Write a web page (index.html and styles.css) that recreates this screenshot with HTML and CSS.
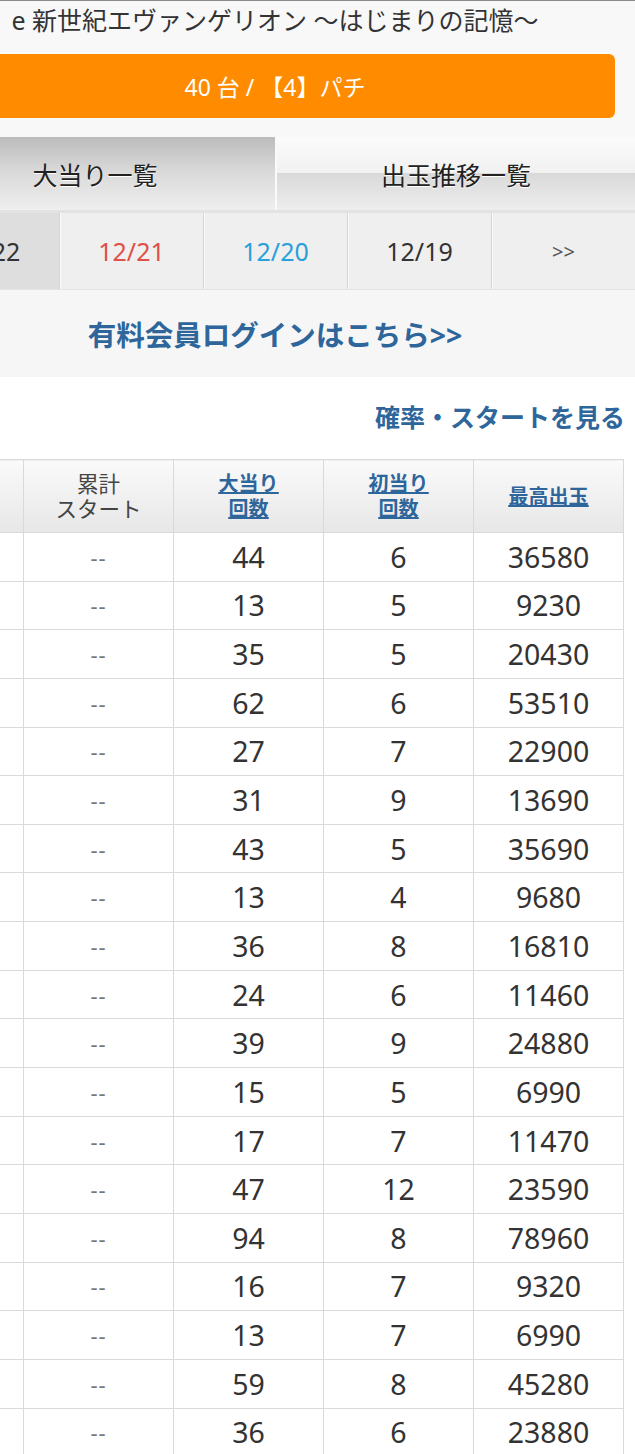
FILE: index.html
```html
<!DOCTYPE html>
<html lang="ja">
<head>
<meta charset="utf-8">
<title>大当り一覧</title>
<link rel="stylesheet" href="styles.css">
</head>
<body>
<div class="page">
  <header class="head">
    <h1 class="title">e 新世紀エヴァンゲリオン ～はじまりの記憶～</h1>
    <div class="machine-bar">40 台 / 【4】パチ</div>
  </header>
  <nav class="tabs">
    <div class="tab tab-active">大当り一覧</div>
    <div class="tab">出玉推移一覧</div>
  </nav>
  <nav class="dates">
    <div class="date date-active">12/22</div>
    <div class="date date-sat">12/21</div>
    <div class="date date-sun">12/20</div>
    <div class="date">12/19</div>
    <div class="date date-more">&gt;&gt;</div>
  </nav>
  <div class="login"><a class="login-link">有料会員ログインはこちら&gt;&gt;</a></div>
  <div class="prob"><a class="prob-link">確率・スタートを見る</a></div>
  <table class="data">
    <colgroup>
      <col class="c-no"><col class="c-w"><col class="c-w"><col class="c-w"><col class="c-w">
    </colgroup>
    <thead>
      <tr>
        <th></th>
        <th class="plain"><span class="hl">累計</span><span class="hl">スタート</span></th>
        <th><a class="sort"><span class="hl">大当り</span><span class="hl">回数</span></a></th>
        <th><a class="sort"><span class="hl">初当り</span><span class="hl">回数</span></a></th>
        <th><a class="sort"><span class="hl">最高出玉</span></a></th>
      </tr>
    </thead>
    <tbody>
      <tr><td></td><td class="dash">--</td><td>44</td><td>6</td><td>36580</td></tr>
      <tr><td></td><td class="dash">--</td><td>13</td><td>5</td><td>9230</td></tr>
      <tr><td></td><td class="dash">--</td><td>35</td><td>5</td><td>20430</td></tr>
      <tr><td></td><td class="dash">--</td><td>62</td><td>6</td><td>53510</td></tr>
      <tr><td></td><td class="dash">--</td><td>27</td><td>7</td><td>22900</td></tr>
      <tr><td></td><td class="dash">--</td><td>31</td><td>9</td><td>13690</td></tr>
      <tr><td></td><td class="dash">--</td><td>43</td><td>5</td><td>35690</td></tr>
      <tr><td></td><td class="dash">--</td><td>13</td><td>4</td><td>9680</td></tr>
      <tr><td></td><td class="dash">--</td><td>36</td><td>8</td><td>16810</td></tr>
      <tr><td></td><td class="dash">--</td><td>24</td><td>6</td><td>11460</td></tr>
      <tr><td></td><td class="dash">--</td><td>39</td><td>9</td><td>24880</td></tr>
      <tr><td></td><td class="dash">--</td><td>15</td><td>5</td><td>6990</td></tr>
      <tr><td></td><td class="dash">--</td><td>17</td><td>7</td><td>11470</td></tr>
      <tr><td></td><td class="dash">--</td><td>47</td><td>12</td><td>23590</td></tr>
      <tr><td></td><td class="dash">--</td><td>94</td><td>8</td><td>78960</td></tr>
      <tr><td></td><td class="dash">--</td><td>16</td><td>7</td><td>9320</td></tr>
      <tr><td></td><td class="dash">--</td><td>13</td><td>7</td><td>6990</td></tr>
      <tr><td></td><td class="dash">--</td><td>59</td><td>8</td><td>45280</td></tr>
      <tr><td></td><td class="dash">--</td><td>36</td><td>6</td><td>23880</td></tr>
    </tbody>
  </table>
</div>
</body>
</html>
```
FILE: styles.css
```css
html, body {
  margin: 0;
  padding: 0;
}
body {
  background: #ffffff;
  overflow: hidden;
  font-family: "Noto Sans", "Noto Sans CJK JP", sans-serif;
  color: #333;
}
.page {
  width: 720px;
  margin-left: -85px;
}
.head {
  background: #f8f8f8;
  border-top: 1px solid #8a8a8a;
  padding: 2px 0 19px;
}
.title {
  margin: 0;
  font-size: 25px;
  font-weight: normal;
  line-height: 34px;
  text-align: center;
  color: #333;
}
.machine-bar {
  margin: 17px 20px 0;
  height: 64px;
  border-radius: 6px;
  background: #ff8c00;
  color: #fff;
  font-size: 23px;
  display: flex;
  align-items: center;
  justify-content: center;
}
.tabs {
  display: grid;
  grid-template-columns: 1fr 1fr;
  height: 73px;
  border-bottom: 3px solid #e3e3e3;
  background: #f8f8f8;
}
.tab {
  display: flex;
  align-items: center;
  justify-content: center;
  font-size: 25px;
  color: #222;
  text-shadow: 0 1px 0 #fff;
  background: linear-gradient(#fbfbfb 0%, #f1f1f1 49%, #d9d9d9 50%, #eeeeee 100%);
  border-left: 2px solid #fafafa;
}
.tab-active {
  background: linear-gradient(#bcbcbc 0%, #d8d8d8 45%, #efefef 100%);
  border-left: none;
}
.dates {
  display: grid;
  grid-template-columns: repeat(5, 1fr);
  height: 76px;
  border-bottom: 1px solid #e4e4e4;
}
.date {
  display: flex;
  align-items: center;
  justify-content: center;
  font-size: 25px;
  color: #333;
  background: #efefef;
  border-left: 1px solid #d6d6d6;
  box-shadow: inset 1px 0 0 #fafafa;
}
.date:first-child {
  border-left: none;
}
.date-active {
  background: #dedede;
}
.date-sat {
  color: #de5048;
}
.date-sun {
  color: #2aa0da;
}
.date-more {
  font-size: 20px;
  color: #555;
}
.login {
  height: 87px;
  background: #f6f6f6;
  display: flex;
  align-items: center;
  justify-content: center;
}
.login-link, .prob-link {
  font-weight: bold;
  color: #2e669b;
  text-decoration: none;
}
.login-link {
  font-size: 28.5px;
}
.prob {
  height: 78px;
  padding: 0 10px 4px 0;
  display: flex;
  align-items: center;
  justify-content: flex-end;
}
.prob-link {
  font-size: 25px;
}
.data {
  margin: 0 12px;
  width: 696px;
  border-collapse: collapse;
  table-layout: fixed;
}
.c-no {
  width: 96px;
}
.c-w {
  width: 150px;
}
.data th {
  height: 72px;
  padding: 0;
  border: 1px solid #d9d9d9;
  background: linear-gradient(#fafafa, #e7e7e7);
  font-weight: normal;
  text-align: center;
  vertical-align: middle;
}
.hl {
  display: block;
  line-height: 25px;
}
.data th.plain {
  font-size: 21.5px;
  color: #444;
}
.sort {
  display: inline-block;
  font-size: 20px;
  font-weight: bold;
  color: #2e669b;
  text-decoration: underline;
}
.sort .hl {
  text-decoration: underline;
}
.data td {
  height: 47.65px;
  padding: 0;
  border: 1px solid #dadada;
  text-align: center;
  vertical-align: middle;
  font-size: 28.5px;
  line-height: 30px;
  color: #333;
  background: #fff;
}
.data td.dash {
  font-size: 22px;
  letter-spacing: 1px;
  color: #777;
}
```
